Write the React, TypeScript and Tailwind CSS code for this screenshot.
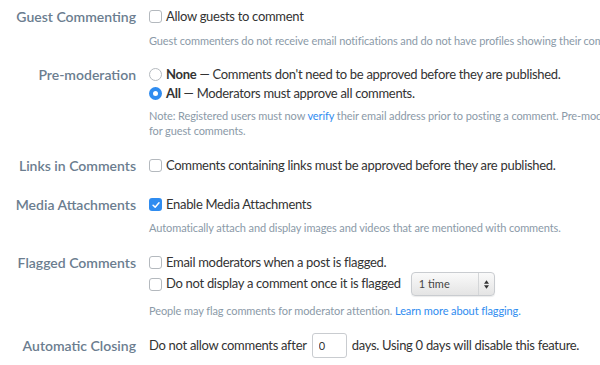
import { useState } from 'react';

const label = 'w-[136px] shrink-0 text-right text-[14px] font-semibold leading-5 text-[#6b7d8f]';
const help = 'text-[11px] leading-[15px] tracking-[-0.1px] text-[#8b9aa8]';
const line = 'flex h-[19px] items-center gap-[4px] whitespace-nowrap text-[13px] tracking-[-0.3px]';

function Checkbox({ checked }: { checked?: boolean }) {
  if (checked) {
    return (
      <span className="flex h-[13px] w-[13px] shrink-0 items-center justify-center rounded-[3px] bg-[#2f8cf0]">
        <svg viewBox="0 0 12 12" className="h-[10px] w-[10px]" fill="none" stroke="white" strokeWidth="1.8" strokeLinecap="round" strokeLinejoin="round">
          <path d="M2.5 6.3 L5 8.6 L9.6 3.4" />
        </svg>
      </span>
    );
  }
  return <span className="h-[13px] w-[13px] shrink-0 rounded-[3px] border border-[#b4b9be] bg-white" />;
}

function Radio({ checked }: { checked?: boolean }) {
  if (checked) {
    return (
      <span className="flex h-[13px] w-[13px] shrink-0 items-center justify-center rounded-full bg-[#2f8cf0]">
        <span className="h-[5px] w-[5px] rounded-full bg-white" />
      </span>
    );
  }
  return <span className="h-[13px] w-[13px] shrink-0 rounded-full border border-[#b4b9be] bg-white" />;
}

export default function App() {
  const [days, setDays] = useState('0');

  return (
    <div className="h-[365px] w-[600px] overflow-hidden bg-white font-['Lato','Liberation_Sans',sans-serif] text-[#333]">
      {/* Guest Commenting */}
      <div className="mt-[7px] flex gap-[13px]">
        <div className={label}>Guest Commenting</div>
        <div className="min-w-0 flex-1">
          <div className={line}>
            <Checkbox />
            <span>Allow guests to comment</span>
          </div>
          <p className={`${help} mt-[7px] whitespace-nowrap`}>
            Guest commenters do not receive email notifications and do not have profiles showing their comments.
          </p>
        </div>
      </div>

      {/* Pre-moderation */}
      <div className="mt-[17px] flex gap-[13px]">
        <div className={label}>Pre-moderation</div>
        <div className="min-w-0 flex-1">
          <div className={line}>
            <Radio />
            <span><b className="font-bold">None</b> — Comments don't need to be approved before they are published.</span>
          </div>
          <div className={line}>
            <Radio checked />
            <span><b className="font-bold">All</b> — Moderators must approve all comments.</span>
          </div>
          <p className={`${help} mt-[5px] whitespace-nowrap`}>
            Note: Registered users must now <a className="text-[#2f8cf0]">verify</a> their email address prior to posting a comment. Pre-moderation applies
            <br />
            for guest comments.
          </p>
        </div>
      </div>

      {/* Links in Comments */}
      <div className="mt-[18px] flex gap-[13px]">
        <div className={label}>Links in Comments</div>
        <div className={line}>
          <Checkbox />
          <span>Comments containing links must be approved before they are published.</span>
        </div>
      </div>

      {/* Media Attachments */}
      <div className="mt-[19px] flex gap-[13px]">
        <div className={label}>Media Attachments</div>
        <div className="min-w-0 flex-1">
          <div className={line}>
            <Checkbox checked />
            <span>Enable Media Attachments</span>
          </div>
          <p className={`${help} mt-[6px] whitespace-nowrap`}>
            Automatically attach and display images and videos that are mentioned with comments.
          </p>
        </div>
      </div>

      {/* Flagged Comments */}
      <div className="mt-[18px] flex gap-[13px]">
        <div className={label}>Flagged Comments</div>
        <div className="min-w-0 flex-1">
          <div className={line}>
            <Checkbox />
            <span>Email moderators when a post is flagged.</span>
          </div>
          <div className="flex h-[24px] items-center gap-[4px] whitespace-nowrap text-[13px] tracking-[-0.3px]">
            <Checkbox />
            <span>Do not display a comment once it is flagged</span>
            <div className="ml-[6px] flex h-[24px] w-[84px] items-center rounded-[4px] border border-[#c9ccd0] bg-gradient-to-b from-[#fafafa] to-[#e4e4e4] text-[11px] tracking-normal text-[#444] shadow-[0_1px_1px_rgba(0,0,0,0.08)]">
              <span className="flex-1 pl-[7px]">1 time</span>
              <span className="flex h-full w-[16px] items-center justify-center border-l border-[#d4d6d8]">
                <svg viewBox="0 0 6 10" className="h-[9px] w-[5px]" fill="#333">
                  <path d="M3 0 L6 4 H0 Z M0 6 H6 L3 10 Z" />
                </svg>
              </span>
            </div>
          </div>
          <p className={`${help} mt-[7px] whitespace-nowrap`}>
            People may flag comments for moderator attention. <a className="text-[#2f8cf0]">Learn more about flagging.</a>
          </p>
        </div>
      </div>

      {/* Automatic Closing */}
      <div className="mt-[15px] flex items-center gap-[13px]">
        <div className={label}>Automatic Closing</div>
        <div className="flex items-center gap-[5px] whitespace-nowrap text-[13px] tracking-[-0.3px]">
          <span>Do not allow comments after</span>
          <input
            value={days}
            onChange={(e) => setDays(e.target.value)}
            className="h-[25px] w-[35px] rounded-[3px] border border-[#c9ccd0] px-[6px] text-[11px] text-[#333] outline-none"
          />
          <span>days. Using 0 days will disable this feature.</span>
        </div>
      </div>
    </div>
  );
}
